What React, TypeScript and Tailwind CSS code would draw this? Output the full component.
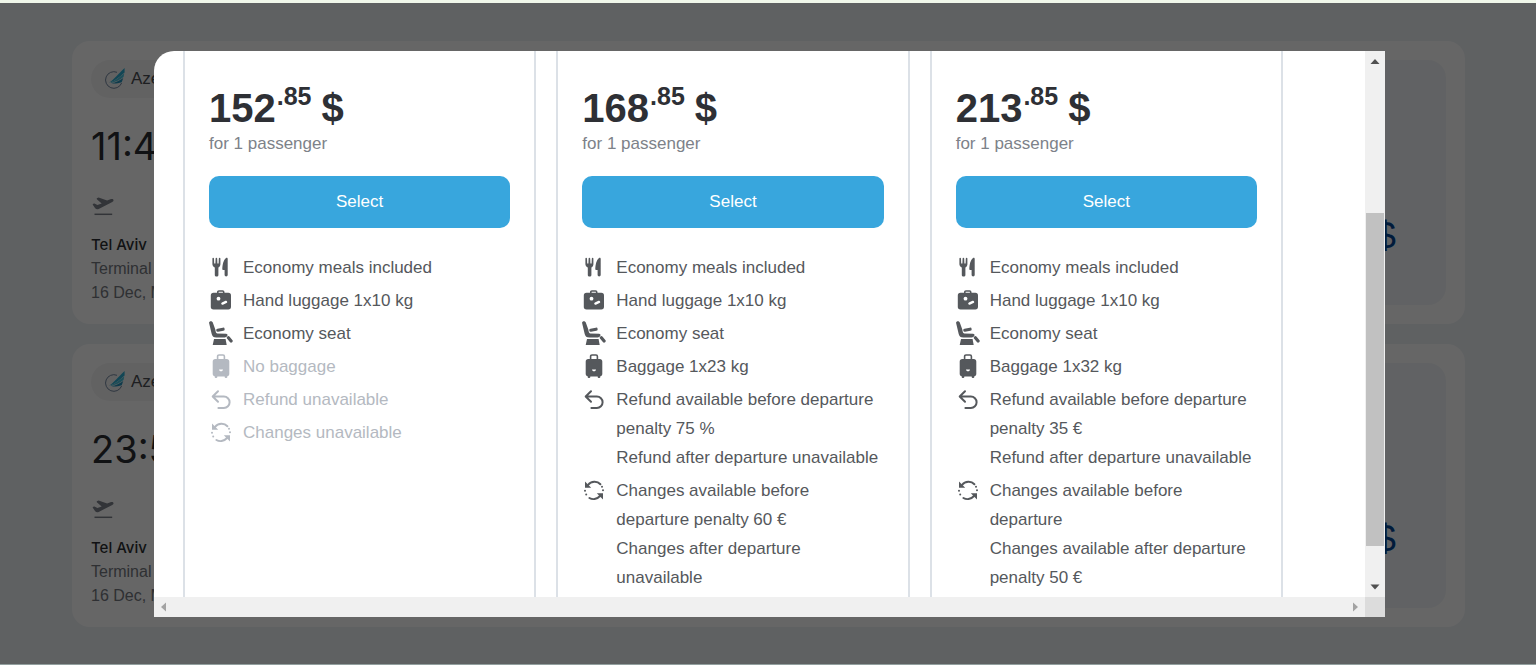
import * as React from "react";

type IconName = "meal" | "hand" | "seat" | "baggage" | "refund" | "change";

type Feature = {
  icon: IconName;
  lines: string[];
  disabled?: boolean;
};

type Fare = {
  id: string;
  whole: string;
  cents: string;
  features: Feature[];
};

const common: Feature[] = [
  { icon: "meal", lines: ["Economy meals included"] },
  { icon: "hand", lines: ["Hand luggage 1x10 kg"] },
  { icon: "seat", lines: ["Economy seat"] },
];

const fares: Fare[] = [
  {
    id: "light",
    whole: "152",
    cents: ".85",
    features: [
      ...common,
      { icon: "baggage", lines: ["No baggage"], disabled: true },
      { icon: "refund", lines: ["Refund unavailable"], disabled: true },
      { icon: "change", lines: ["Changes unavailable"], disabled: true },
    ],
  },
  {
    id: "classic",
    whole: "168",
    cents: ".85",
    features: [
      ...common,
      { icon: "baggage", lines: ["Baggage 1x23 kg"] },
      {
        icon: "refund",
        lines: [
          "Refund available before departure",
          "penalty 75 %",
          "Refund after departure unavailable",
        ],
      },
      {
        icon: "change",
        lines: [
          "Changes available before",
          "departure penalty 60 €",
          "Changes after departure",
          "unavailable",
        ],
      },
    ],
  },
  {
    id: "plus",
    whole: "213",
    cents: ".85",
    features: [
      ...common,
      { icon: "baggage", lines: ["Baggage 1x32 kg"] },
      {
        icon: "refund",
        lines: [
          "Refund available before departure",
          "penalty 35 €",
          "Refund after departure unavailable",
        ],
      },
      {
        icon: "change",
        lines: [
          "Changes available before",
          "departure",
          "Changes available after departure",
          "penalty 50 €",
        ],
      },
    ],
  },
];

const flights = [
  { id: "first", time: "11:45" },
  { id: "second", time: "23:55" },
];

const paths: Record<IconName, React.ReactNode> = {
  meal: (
    <>
      <path
        fill="currentColor"
        d="M3.4 3.6c0-1 1.5-1 1.6 0l.2 4.800h1.200l.2-4.900c0-1 1.600-1 1.600 0l.2 4.900h1.200l.2-4.800c.1-1 1.600-1 1.600 0v5.700c0 1.600-.9 2.800-2 3.300v7.500c0 2-3.600 2-3.600 0v-7.500c-1.200-.5-2.400-1.700-2.400-3.300z"
      />
      <path
        fill="currentColor"
        d="M18.700 3.800v16.300c0 1.900-3.100 1.900-3.100 0v-5h-1.500c-.5 0-.8-.3-.8-.8.1-4.200 1-9.200 3.700-11.300.8-.6 1.700-.2 1.700.8z"
      />
    </>
  ),
  hand: (
    <>
      <path
        fill="none"
        stroke="currentColor"
        strokeWidth="1.600"
        d="M8.800 5.500V4.100c0-.7.4-1.100 1.100-1.100h3.700c.7 0 1.100.4 1.100 1.100v1.400"
      />
      <rect x="1.800" y="4.700" width="20.200" height="16.800" rx="2.700" fill="currentColor" />
      <circle cx="9.500" cy="10.700" r="1.900" fill="#fff" />
      <path stroke="#fff" strokeWidth="2.400" strokeLinecap="round" d="m13.400 15.600 3.600-1.700" />
    </>
  ),
  seat: (
    <>
      <path
        fill="currentColor"
        d="M.1 2C-.3 0 2.900-.6 3.700 1.300l2.600 7.300c.4 1.700.4 3.600 2 3.900l8.800.3c1.600.1 1.900 1.700.7 2.600-.8.7-1.800 1.200-3 1.200H7.300c-2.700 0-4-1.300-4.600-3.600z"
      />
      <path
        stroke="currentColor"
        strokeWidth="3.200"
        strokeLinecap="round"
        d="m8.800 9.200 5.300-1"
      />
      <path
        stroke="currentColor"
        strokeWidth="3.200"
        strokeLinecap="round"
        d="m19.400 16.800 2.700 3.200"
      />
      <path fill="currentColor" d="M5 17.900h11.600l1.100 6.100H3.700z" />
    </>
  ),
  baggage: (
    <>
      <path
        fill="none"
        stroke="currentColor"
        strokeWidth="1.600"
        d="M8.600 5.500V2.400c0-.9.500-1.400 1.400-1.400h4c.9 0 1.400.5 1.400 1.400v3.100"
      />
      <path
        fill="currentColor"
        d="M6.200 5h11.600c1.500 0 2.500 1 2.500 2.400v12.700c0 1.200-.8 2-2 2.200v.6c0 1.400-2.600 1.400-2.600 0v-.5H8.300v.5c0 1.400-2.600 1.400-2.600 0v-.6c-1.200-.2-2-1-2-2.200V7.400C3.700 6 4.700 5 6.200 5z"
      />
      <path fill="#fff" d="M10 15.500h4c0 2.400-4 2.400-4 0z" />
    </>
  ),
  refund: (
    <path
      fill="none"
      stroke="currentColor"
      strokeWidth="2"
      strokeLinecap="round"
      strokeLinejoin="round"
      d="M9 4.200 3.700 9.500 9 14.800M4 9.500h10.900a5.700 5.700 0 0 1 0 11.400H9.400"
    />
  ),
  change: (
    <>
      <g fill="none" stroke="currentColor" strokeWidth="2" strokeLinecap="round">
        <path d="M6 7c3.200-4 9.200-4.200 12.400-.8M18 18c-3.200 3.600-7.600 3.800-10.600 2" />
      </g>
      <path fill="currentColor" d="M3 3.600v6.200h6.200zM21 21.400v-6.200h-6.200z" />
      <g fill="currentColor">
        <circle cx="20" cy="8.700" r="1" />
        <circle cx="21" cy="12.200" r="1" />
        <circle cx="3" cy="12.800" r="1" />
        <circle cx="4.200" cy="16.600" r="1" />
      </g>
    </>
  ),
};

function FeatureIcon({ name }: { name: IconName }) {
  return (
    <svg viewBox="0 0 24 24" className="mt-[2px] size-6 shrink-0" aria-hidden>
      {paths[name]}
    </svg>
  );
}

function AirlineLogo() {
  return (
    <svg viewBox="0 0 24 24" className="size-6" aria-hidden>
      <path
        fill="none"
        stroke="#7487a0"
        strokeWidth="1"
        d="M14 5.300A8.300 8.300 0 1 0 18.600 16"
      />
      <path fill="#2fb0d4" d="M6 15.800C11 12.500 15 7 21.600 1v4.500C16 10.500 12 14 6 15.800z" />
      <path fill="#4ac4de" d="M7 16c6-2.800 9.500-6.200 14.300-9.500l-.8 3.600C17 13 13 15 7 16z" />
      <path fill="#2795bd" d="M8.500 16.500c4.500-1 8-3 11.800-5.500l-1.600 4.300c-3 1-6 1.400-10.200 1.200z" />
    </svg>
  );
}

function TakeoffIcon() {
  return (
    <svg viewBox="0 0 24 24" className="mt-6 size-6 text-[#7d828c]" aria-hidden>
      <path
        fill="currentColor"
        d="M1.800 10.700c-.2-.5 0-.9.500-1l1.200-.1 2.900 1.500 4.300-1.600-4.600-4c-.6-.6-.5-1.200.2-1.500l1.300-.4 8.500 3 4-1.500c2.600-.8 3.300 1.900 1.200 2.800L7.700 14.900c-1.700.6-2.800.2-3.700-1z"
      />
      <path stroke="currentColor" strokeWidth="1.500" d="M3.500 20.300h17.700" />
    </svg>
  );
}

function FlightCard({ time }: { time: string }) {
  return (
    <article className="flex justify-between rounded-[18px] bg-white p-[19px]">
      <div>
        <div className="flex h-[38px] w-fit items-center gap-1 rounded-full bg-[#f5f5f6] pl-3 pr-5 text-[17px] text-[#4b4e54]">
          <AirlineLogo />
          <span>Azerbaijan Airlines</span>
        </div>
        <p className="mt-6 font-[Inter] text-[38px] leading-[48px] text-[#2c2f33]">
          {time}
        </p>
        <TakeoffIcon />
        <div className="mt-[15px] text-[16px] leading-6 text-[#75797f]">
          <p className="font-[Inter] text-[15px] font-medium text-[#2c2f33]">Tel Aviv</p>
          <p>Terminal 3</p>
          <p>16 Dec, Mon</p>
        </div>
      </div>
      <div className="flex w-[280px] flex-col items-end rounded-[18px] bg-[#f3f6f9] pr-[50px] pt-[152px]">
        <p className="text-[38px] leading-[48px] text-[#004494]">152 $</p>
      </div>
    </article>
  );
}

function FareColumn({ fare }: { fare: Fare }) {
  return (
    <section className="border-x-2 border-[#dce1e7] px-6 pt-[33px]">
      <div className="flex items-start text-[40px] font-bold leading-[48px] text-[#2e3035]">
        <span>{fare.whole}</span>
        <span className="ml-px text-[25px] leading-6">{fare.cents}</span>
        <span className="ml-[10px]">$</span>
      </div>
      <p className="text-[17px] leading-6 text-[#7d8289]">for 1 passenger</p>
      <button
        type="button"
        className="mt-5 h-[52px] w-full rounded-[10px] bg-[#38a6dd] text-[17px] text-white"
      >
        Select
      </button>
      <ul className="mt-[25px] flex flex-col gap-1">
        {fare.features.map((feature) => (
          <li
            key={feature.icon}
            className={
              feature.disabled
                ? "flex gap-[10px] text-[#b4b9c1]"
                : "flex gap-[10px] text-[#55585c]"
            }
          >
            <FeatureIcon name={feature.icon} />
            <div className="whitespace-nowrap text-[17px] leading-[29px]">
              {feature.lines.map((line) => (
                <p key={line}>{line}</p>
              ))}
            </div>
          </li>
        ))}
      </ul>
    </section>
  );
}

function VerticalScrollbar() {
  return (
    <div className="flex w-5 shrink-0 flex-col items-center bg-[#f0f0f0]" aria-hidden>
      <svg viewBox="0 0 20 20" className="size-5">
        <path fill="#505050" d="M5.500 13 10 8l4.500 5z" />
      </svg>
      <div className="flex w-full grow flex-col px-px">
        <div className="grow-[142]" />
        <div className="grow-[332] bg-[#c1c1c1]" />
        <div className="grow-[31]" />
      </div>
      <svg viewBox="0 0 20 20" className="size-5">
        <path fill="#505050" d="M5.500 7.500 10 12.500l4.500-5z" />
      </svg>
    </div>
  );
}

function HorizontalScrollbar() {
  return (
    <div className="flex h-5 shrink-0 bg-[#f0f0f0]" aria-hidden>
      <svg viewBox="0 0 20 20" className="size-5">
        <path fill="#a3a3a3" d="M12 5.500 7 10l5 4.500z" />
      </svg>
      <div className="grow" />
      <svg viewBox="0 0 20 20" className="size-5">
        <path fill="#a3a3a3" d="M8 5.500 13 10l-5 4.500z" />
      </svg>
      <div className="w-5 bg-[#dcdcdc]" />
    </div>
  );
}

export default function App() {
  return (
    <div className="relative h-screen overflow-hidden border-b border-t-[3px] border-b-[#93a09f] border-t-[#f0f7ea] bg-[#eef2f6] font-['Liberation_Sans',sans-serif]">
      <main className="flex flex-col gap-5 pl-[72px] pr-[71px] pt-[38px]">
        {flights.map((flight) => (
          <FlightCard key={flight.id} time={flight.time} />
        ))}
      </main>
      <div className="absolute inset-0 flex bg-black/60 pb-[47px] pl-[154px] pr-[151px] pt-12">
        <div
          role="dialog"
          aria-label="Fares"
          className="flex min-w-0 grow flex-col overflow-hidden rounded-tl-[20px] bg-white"
        >
          <div className="flex min-h-0 grow">
            <div className="grid grow grid-cols-3 gap-5 overflow-hidden pl-[29px] pr-[82px]">
              {fares.map((fare) => (
                <FareColumn key={fare.id} fare={fare} />
              ))}
            </div>
            <VerticalScrollbar />
          </div>
          <HorizontalScrollbar />
        </div>
      </div>
    </div>
  );
}
